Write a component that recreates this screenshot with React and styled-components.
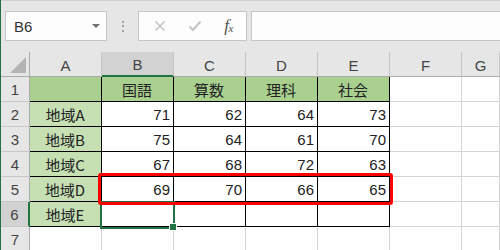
import React from "react";
import styled, { createGlobalStyle } from "styled-components";

const Global = createGlobalStyle`
  html, body { margin: 0; padding: 0; background: #fff; overflow: hidden; }
  * { box-sizing: border-box; }
`;

const GREEN = "#217346";
const JP = `"Noto Sans CJK JP", sans-serif`;
const LAT = `"Liberation Sans", Arial, sans-serif`;

const Window = styled.div`
  width: 500px;
  height: 250px;
  border-left: 1px solid ${GREEN};
  overflow: hidden;
  background: #fff;
  font-family: ${LAT};
`;

const Toolbar = styled.div`
  height: 52px;
  background: #e6e6e6;
  border-top: 1px solid #d0d0d0;
  display: flex;
  align-items: flex-start;
  padding: 10px 0 0 4px;
`;

const Box = styled.div`
  height: 30px;
  background: #fdfdfd;
  border: 1px solid #c6c6c6;
  display: flex;
  align-items: center;
`;

const NameBox = styled(Box)`
  width: 102px;
  padding: 0 0 0 8px;
  justify-content: space-between;
  font-size: 15px;
  color: #333;
`;

const Caret = styled.span`
  width: 0;
  height: 0;
  margin-right: 6px;
  border-left: 4px solid transparent;
  border-right: 4px solid transparent;
  border-top: 4px solid #707070;
`;

const Grip = styled.div`
  width: 31px;
  height: 30px;
  display: flex;
  flex-direction: column;
  align-items: center;
  justify-content: center;
  gap: 2.5px;
`;

const Dot = styled.span`
  width: 2px;
  height: 2px;
  background: #a0a0a0;
`;

const ButtonsBox = styled(Box)`
  width: 109px;
  margin-right: 4px;
  justify-content: space-around;
  padding: 0 2px 0 4px;
`;

const Fx = styled.span`
  font-family: "Liberation Serif", serif;
  font-style: italic;
  font-size: 17px;
  color: #505050;
  letter-spacing: -0.5px;
  sub {
    font-size: 11px;
    vertical-align: -1px;
  }
`;

const FormulaBox = styled(Box)`
  flex: 1;
  margin-right: -6px;
`;

const Sheet = styled.div`
  display: grid;
  grid-template-columns: 29px repeat(6, 72px) 1fr;
  grid-template-rows: 25px repeat(7, 25px);
`;

const Cell = styled.div`
  grid-row: ${(p) => p.$r};
  grid-column: ${(p) => p.$c};
  border-right: 1px solid ${(p) => (p.$dark ? "#000" : "#d4d4d4")};
  border-bottom: 1px solid ${(p) => (p.$dark ? "#000" : "#d4d4d4")};
  background: ${(p) => p.$bg || "#fff"};
  display: flex;
  align-items: center;
  justify-content: ${(p) => (p.$num ? "flex-end" : "center")};
  padding: 1px 3px 0 2px;
  font-family: ${(p) => (p.$num ? LAT : JP)};
  font-size: 15px;
  color: #222;
  white-space: nowrap;
`;

const ColHead = styled.div`
  grid-row: 1;
  grid-column: ${(p) => p.$c};
  background: ${(p) => (p.$sel ? "#d2d2d2" : "#e6e6e6")};
  border-right: 1px solid #c4c4c4;
  border-bottom: ${(p) => (p.$sel ? `2px solid ${GREEN}` : "1px solid #ababab")};
  display: flex;
  align-items: center;
  justify-content: center;
  padding-top: 2px;
  font-size: 15px;
  color: #444;
`;

const RowHead = styled.div`
  grid-row: ${(p) => p.$r};
  grid-column: 1;
  background: ${(p) => (p.$sel ? "#d2d2d2" : "#e6e6e6")};
  border-right: ${(p) => (p.$sel ? `2px solid ${GREEN}` : "1px solid #ababab")};
  border-bottom: 1px solid #c8c8c8;
  display: flex;
  align-items: center;
  justify-content: center;
  padding-top: 1px;
  font-size: 15px;
  color: #444;
`;

const Corner = styled.div`
  grid-row: 1;
  grid-column: 1;
  background: #e6e6e6;
  border-right: 1px solid #ababab;
  border-bottom: 1px solid #ababab;
  position: relative;
  &::after {
    content: "";
    position: absolute;
    right: 3px;
    bottom: 3px;
    width: 0;
    height: 0;
    border-left: 16px solid transparent;
    border-bottom: 16px solid #b4b4b4;
  }
`;

const Highlight = styled.div`
  grid-row: 6;
  grid-column: 3 / 7;
  margin: -4px -3px -3px -4px;
  border: 3px solid #ff0000;
  border-radius: 3px;
  z-index: 2;
  pointer-events: none;
`;

const Selection = styled.div`
  grid-row: 7;
  grid-column: 3;
  margin: -1px -1px -2px -2px;
  border: 2px solid ${GREEN};
  position: relative;
  z-index: 1;
  pointer-events: none;
  &::after {
    content: "";
    position: absolute;
    right: -4px;
    bottom: -4px;
    width: 6px;
    height: 6px;
    background: ${GREEN};
    border: 1px solid #fff;
  }
`;

const cols = ["A", "B", "C", "D", "E", "F", "G"];
const subjects = ["国語", "算数", "理科", "社会"];
const rows = [
  ["地域A", 71, 62, 64, 73],
  ["地域B", 75, 64, 61, 70],
  ["地域C", 67, 68, 72, 63],
  ["地域D", 69, 70, 66, 65],
  ["地域E", "", "", "", ""],
];

const XIcon = () => (
  <svg width="12" height="12" viewBox="0 0 12 12">
    <path d="M1.5 1.5 L10.5 10.5 M10.5 1.5 L1.5 10.5" stroke="#c4c4c4" strokeWidth="1.6" fill="none" />
  </svg>
);

const CheckIcon = () => (
  <svg width="14" height="12" viewBox="0 0 14 12">
    <path d="M1.5 6.5 L5 10 L12.5 1.5" stroke="#c4c4c4" strokeWidth="2" fill="none" />
  </svg>
);

export default function App() {
  return (
    <>
      <Global />
      <Window>
        <Toolbar>
          <NameBox>
            B6
            <Caret />
          </NameBox>
          <Grip>
            <Dot />
            <Dot />
            <Dot />
          </Grip>
          <ButtonsBox>
            <XIcon />
            <CheckIcon />
            <Fx>
              f<sub>x</sub>
            </Fx>
          </ButtonsBox>
          <FormulaBox />
        </Toolbar>
        <Sheet>
          <Corner />
          {cols.map((c, i) => (
            <ColHead key={c} $c={i + 2} $sel={c === "B"}>
              {c}
            </ColHead>
          ))}
          {Array.from({ length: 7 }, (_, i) => (
            <RowHead key={i} $r={i + 2} $sel={i === 5}>
              {i + 1}
            </RowHead>
          ))}
          <Cell $r={2} $c={2} $dark $bg="#a9d08e" />
          {subjects.map((s, i) => (
            <Cell key={s} $r={2} $c={i + 3} $dark $bg="#a9d08e">
              {s}
            </Cell>
          ))}
          <Cell $r={2} $c={7} />
          <Cell $r={2} $c={8} />
          {rows.map((row, ri) => (
            <React.Fragment key={ri}>
              <Cell $r={ri + 3} $c={2} $dark $bg="#c6e0b4">
                {row[0]}
              </Cell>
              {row.slice(1).map((v, ci) => (
                <Cell key={ci} $r={ri + 3} $c={ci + 3} $dark $num>
                  {v}
                </Cell>
              ))}
              <Cell $r={ri + 3} $c={7} />
              <Cell $r={ri + 3} $c={8} />
            </React.Fragment>
          ))}
          {Array.from({ length: 7 }, (_, i) => (
            <Cell key={i} $r={8} $c={i + 2} />
          ))}
          <Highlight />
          <Selection />
        </Sheet>
      </Window>
    </>
  );
}
